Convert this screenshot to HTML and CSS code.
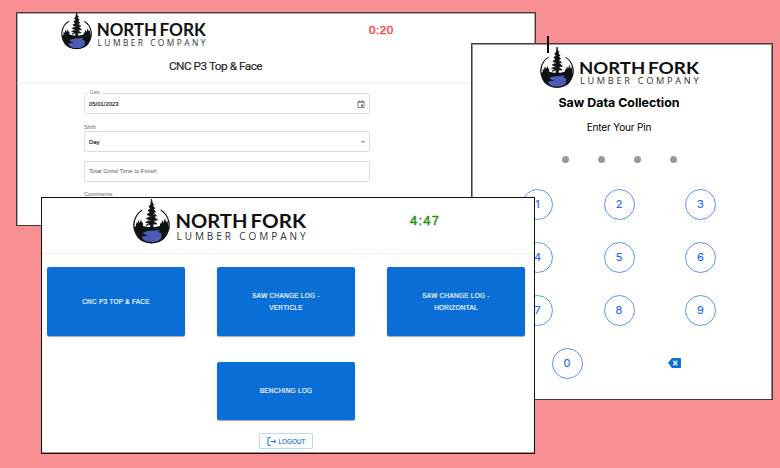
FILE: index.html
```html
<!DOCTYPE html>
<html lang="en">
<head>
<meta charset="utf-8">
<title>North Fork Lumber Company</title>
<link rel="stylesheet" href="styles.css">
</head>
<body>
<svg class="defs" aria-hidden="true">
  <symbol id="emblem" viewBox="0 0 37 45">
    <path d="M9 10.500A18.300 18.300 0 1 0 28 10.500L27.500 11.500A16.900 16.900 0 1 1 9.500 11.500Z" fill="#111"/>
    <path d="M1.500 28L3 27V23L4 25L5.500 21L6.500 24L8 20.500L9 24L10 23V27L15 28H22L27 27V24L28 25L29.500 21L30.500 24L32 19L33 23L34.500 22L35.500 28Q35 43.800 18.500 44.200Q2 43.800 1.500 28Z" fill="#101113"/>
    <path d="M18.500 0L19.300 4L20.800 5.500L19.600 6.500L21.800 9.500L20 10L22.500 13L20.300 13.500L23.500 17L20.500 17.500L24.500 21L20.500 21.500L24 25L20 25V29H17.500V25L13 26.500L16.500 24L12.500 23.500L16.500 21L13.300 19.500L17 17.500L14 15.500L17.300 13.500L15 11.500L17.500 9.500L16 7.500L17.800 5.500Z" fill="#111" stroke="#111" stroke-width=".8"/>
    <path d="M14.500 21L17.500 22M15 16.800L17.500 18M22.500 15L20.500 15.500M23.500 23L21 23" stroke="#fff" stroke-width=".5"/>
    <path d="M10 33.500Q14 31.500 19 31.700L28 30.700Q24 32 26 33.300Q30 34.500 28 37Q30 39 25 42Q20 44 13 42.300Q8.500 40 9 38Q10 37 16 36.500Q10.500 35.500 10 33.500Z" fill="#4b5cb3"/>
  </symbol>
</svg>
<main class="canvas">
  <section class="window form-window">
    <header class="form-head">
      <div class="brand-row">
        <svg class="logo" viewBox="0 0 173 45"><use href="#emblem" width="37" height="45"/><text class="logo-name" x="42.500" y="29" textLength="72" lengthAdjust="spacingAndGlyphs">NORTH</text><text class="logo-name" x="117.500" y="29" textLength="55.500" lengthAdjust="spacingAndGlyphs">FORK</text><text class="logo-sub" x="43.500" y="40.500" textLength="129">LUMBER COMPANY</text></svg>
        <span class="timer late">0:20</span>
      </div>
      <h1 class="form-title">CNC P3 Top &amp; Face</h1>
    </header>
    <div class="form">
      <div class="field date"><span class="legend">Date</span><span>05/01/2023</span>
        <svg class="calendar" viewBox="0 0 16 16"><path d="M2 3H14V15H2ZM2 4.500H14M5 .5V3M11 .5V3" fill="none" stroke="#777" stroke-width="1.800"/><path d="M8 9H12V13H8Z" fill="#666"/></svg>
      </div>
      <label class="label">Shift</label>
      <div class="field day"><span>Day</span><i class="caret"></i></div>
      <div class="field grind">Total Grind Time to Finish</div>
      <label class="label comments">Comments</label>
    </div>
  </section>

  <section class="window pin-window">
    <svg class="logo" viewBox="0 0 173 45"><use href="#emblem" width="37" height="45"/><text class="logo-name" x="42.500" y="29" textLength="72" lengthAdjust="spacingAndGlyphs">NORTH</text><text class="logo-name" x="117.500" y="29" textLength="55.500" lengthAdjust="spacingAndGlyphs">FORK</text><text class="logo-sub" x="43.500" y="40.500" textLength="129">LUMBER COMPANY</text></svg>
    <div class="pin-body">
      <h2 class="pin-title">Saw Data Collection</h2>
      <p class="pin-hint">Enter Your Pin</p>
      <div class="dots"><i></i><i></i><i></i><i></i></div>
      <div class="keys">
        <button>1</button><button>2</button><button>3</button>
        <button>4</button><button>5</button><button>6</button>
        <button>7</button><button>8</button><button>9</button>
      </div>
      <div class="last-keys">
        <button>0</button>
        <svg class="backspace" viewBox="0 0 13 10"><path d="M4 0H12Q13 0 13 1V9Q13 10 12 10H4L0 5Z" fill="#0a70d6"/><path d="M5.300 2.800L9.300 7.200M9.300 2.800L5.300 7.200" stroke="#fff" stroke-width="1.300"/></svg>
      </div>
    </div>
  </section>

  <section class="window menu-window">
    <header class="menu-head">
      <svg class="logo" viewBox="0 0 173 45"><use href="#emblem" width="37" height="45"/><text class="logo-name" x="42.500" y="29" textLength="72" lengthAdjust="spacingAndGlyphs">NORTH</text><text class="logo-name" x="117.500" y="29" textLength="55.500" lengthAdjust="spacingAndGlyphs">FORK</text><text class="logo-sub" x="43.500" y="40.500" textLength="129">LUMBER COMPANY</text></svg>
      <span class="timer good">4:47</span>
    </header>
    <div class="tiles">
      <button class="tile">CNC P3 TOP &amp; FACE</button>
      <button class="tile">SAW CHANGE LOG -<br>VERTICLE</button>
      <button class="tile">SAW CHANGE LOG -<br>HORIZONTAL</button>
      <button class="tile bench">BENCHING LOG</button>
    </div>
    <button class="logout"><svg viewBox="0 0 10 9"><path d="M4 .7H1V8.300H4M3.500 4.500H8.800M6.800 2.500L8.900 4.500L6.800 6.500" fill="none" stroke="#1976d2" stroke-width="1"/></svg>LOGOUT</button>
  </section>
  <i class="text-cursor"></i>
</main>
</body>
</html>
```
FILE: styles.css
```css
* { box-sizing: border-box; }
body { margin: 0; font-family: "Liberation Sans", sans-serif; }
h1, h2, p { margin: 0; }
button { padding: 0; font-family: inherit; }
.defs { position: absolute; width: 0; height: 0; }
.canvas { position: relative; width: 780px; height: 468px; overflow: hidden; background: #f88f93; }
.window { position: absolute; overflow: hidden; background: #fff; border: 1px solid #000; }
.logo { display: block; flex: none; overflow: visible; }
.logo-name { font: 700 19.500px Lato, sans-serif; fill: #111; }
.logo-sub { font: 400 10px "Open Sans", sans-serif; fill: #333; }
.timer { font-weight: 400; -webkit-text-stroke: .45px currentColor; }

.form-window { left: 16px; top: 12px; width: 520px; height: 214px; border-color: #4d3435; box-shadow: inset 1px 1px #aaa, inset -1px 0 #aaa; }
.form-head { height: 71px; border-bottom: 1px solid #eee; }
.brand-row { display: flex; height: 37px; padding-left: 44px; }
.form-window .logo { width: 145px; height: 37.700px; margin-top: -1px; }
.late { margin: 10px 0 0 163px; font-size: 11.700px; line-height: 14px; letter-spacing: .5px; color: #fb4545; }
.form-title { width: 397px; text-align: center; font: 400 11.800px/18px Roboto, sans-serif; margin-top: 7px; letter-spacing: -.5px; color: #222; -webkit-text-stroke: .15px #222; }
.form { width: 286px; margin-left: 67px; padding-top: 9px; font-size: 5.900px; color: #222; }
.field { position: relative; display: flex; align-items: center; height: 21px; border: 1px solid #ddd; border-radius: 2px; padding: 0 4px; }
.date { margin-bottom: 9px; }
.date, .day { -webkit-text-stroke: .15px #222; }
.legend { position: absolute; top: -4px; left: 3px; padding: 0 2px; background: #fff; font-size: 4.700px; line-height: 6px; color: #888; -webkit-text-stroke: 0; }
.calendar { width: 8px; height: 8px; margin-left: auto; }
.label { display: block; height: 8px; line-height: 8px; color: #666; }
.caret { margin-left: auto; border: 2px solid transparent; border-top-color: #888; border-bottom: 0; }
.grind { margin-top: 9px; padding-bottom: 1px; color: #555; letter-spacing: .04px; }
.comments { margin-top: 8px; }

.pin-window { left: 471px; top: 43px; width: 302px; height: 357px; border-color: #4d3838; box-shadow: inset 1px 1px #999, inset -1px 0 #888; }
.pin-window .logo { width: 159px; height: 41.400px; margin: 3px 0 0 68px; }
.pin-body { width: 294px; text-align: center; font-family: Inter, sans-serif; }
.pin-title { margin-top: 6px; font-size: 12.400px; line-height: 18px; color: #000; }
.pin-hint { margin-top: 6px; font-size: 10px; line-height: 18px; letter-spacing: -.15px; }
.dots { display: flex; justify-content: space-between; width: 115px; margin: 19.500px 0 0 90px; }
.dots i { width: 7px; height: 7px; border-radius: 50%; background: #999; }
.keys { display: grid; grid-template-columns: repeat(3, 31px); column-gap: 50.500px; row-gap: 22px; margin: 26.200px 0 0 50px; }
.pin-body button { width: 31px; height: 31px; border: 1px solid #5a95f8; border-radius: 50%; background: #fff; color: #1768f2; font-size: 11px; line-height: 28px; padding-bottom: 1px; -webkit-text-stroke: .15px #1768f2; }
.last-keys { display: flex; align-items: center; margin: 21.500px 0 0 79.500px; }
.backspace { width: 13px; height: 10px; margin-left: 85px; }

.menu-window { left: 41px; top: 197px; width: 494px; height: 257px; border-color: #111; box-shadow: inset 0 -1px #b78a8c; }
.menu-head { display: flex; height: 56px; padding-left: 91px; border-bottom: 1px solid #eee; }
.menu-head .logo { width: 173px; height: 45px; margin-top: 1px; }
.good { margin: 15px 0 0 104px; font-size: 13px; line-height: 15px; letter-spacing: 1.200px; color: #239414; }
.tiles { display: grid; grid-template-columns: repeat(3, 138px); column-gap: 32px; row-gap: 26px; grid-template-rows: 69px 58px; margin: 13px 0 0 5px; }
.tile { border: 0; border-radius: 2px; background: #096fd6; color: #fff; font-size: 6.400px; line-height: 11.300px; letter-spacing: .3px; -webkit-text-stroke: .15px #fff; box-shadow: 0 1px 1px rgba(0,0,0,.35); }
.bench { grid-column: 2; padding-bottom: 1px; }
.logout { display: flex; align-items: center; justify-content: center; gap: 2px; width: 54px; height: 16px; margin: 13px 0 0 217px; border: 1px solid #bcd7f1; border-radius: 1px; background: #fff; color: #1976d2; font-size: 6.400px; -webkit-text-stroke: .15px #1976d2; }
.logout svg { width: 10px; height: 9px; }
.text-cursor { position: absolute; left: 547px; top: 36px; width: 2px; height: 17px; background: #000; }
```
